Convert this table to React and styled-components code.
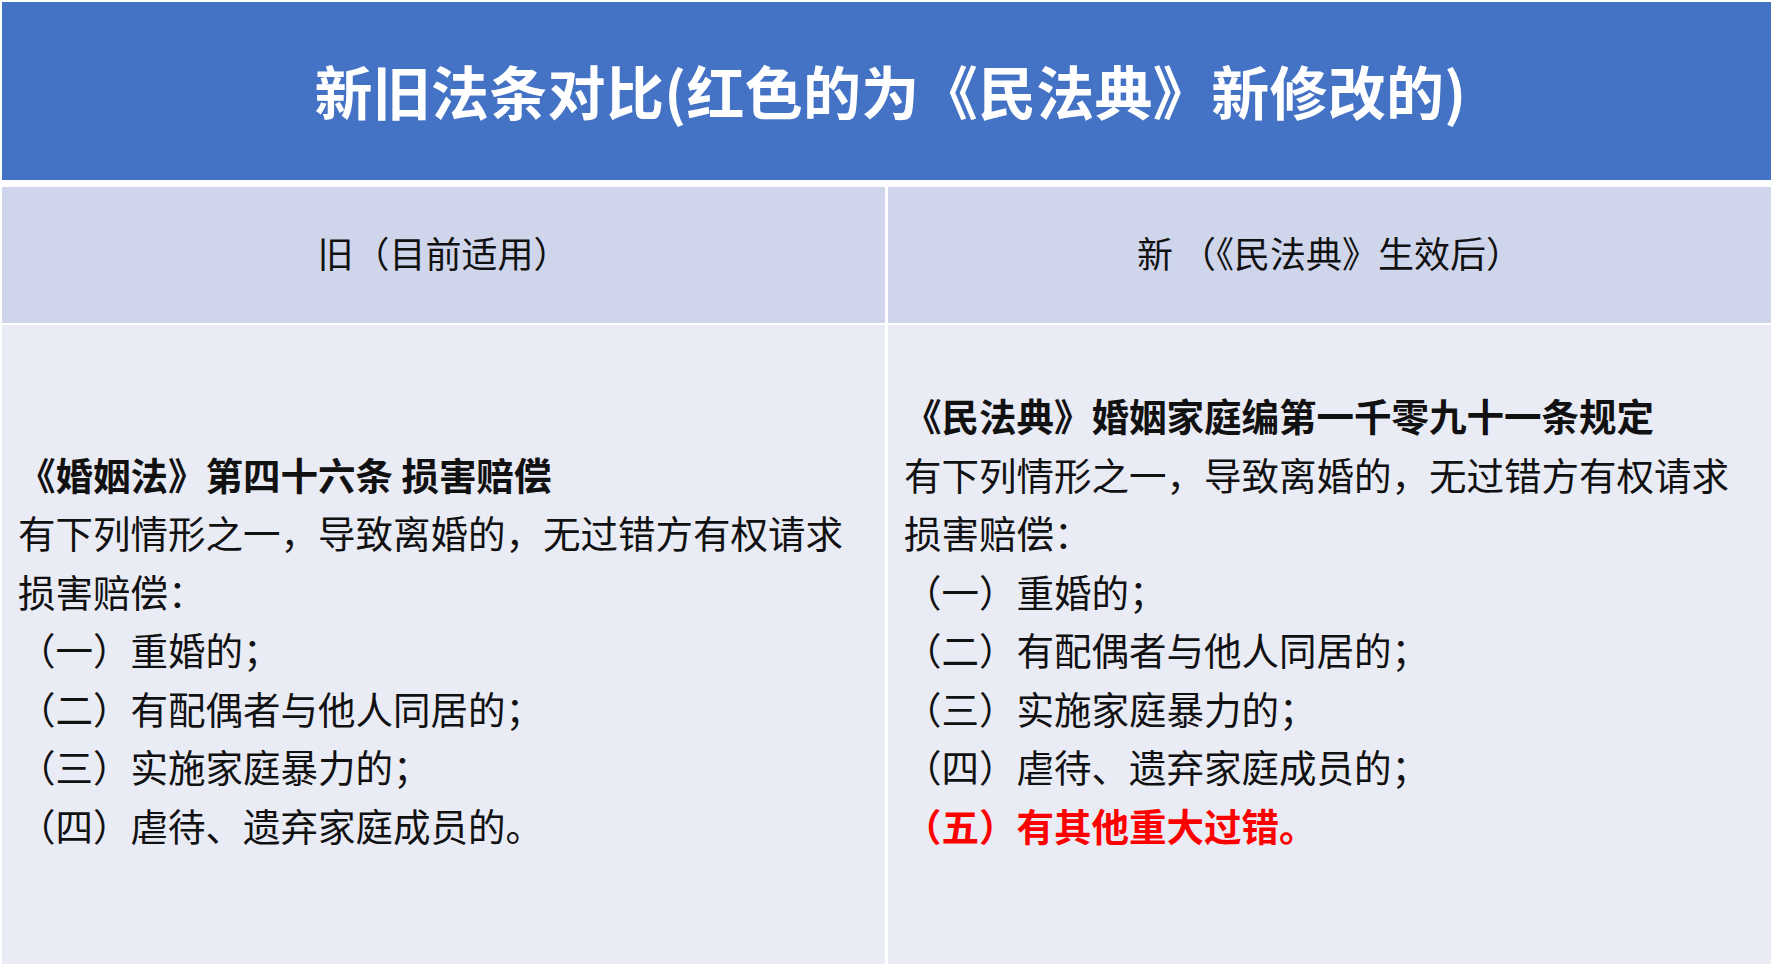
import React from "react";
import styled, { createGlobalStyle } from "styled-components";

const Global = createGlobalStyle`
  html, body { margin: 0; padding: 0; background: #ffffff; }
  body { font-family: "Noto Sans CJK SC", "Noto Sans", sans-serif; }
`;

const Page = styled.div`
  width: 1777px;
  height: 968px;
  box-sizing: border-box;
  padding: 2px 6px 4px 2px;
  background: #ffffff;
`;

const TitleBar = styled.div`
  height: 178px;
  background: #4472c4;
  display: flex;
  align-items: center;
  justify-content: center;
  margin-bottom: 7px;
`;

const Title = styled.h1`
  margin: 0;
  padding-bottom: 2px;
  padding-left: 8px;
  color: #ffffff;
  font-size: 58px;
  font-weight: 700;
  line-height: 1;
  letter-spacing: 0.3px;
`;

const Grid = styled.div`
  display: grid;
  grid-template-columns: 1fr 1fr;
  grid-template-rows: 136px 639px;
  column-gap: 3px;
  row-gap: 2px;
`;

const HeadCell = styled.div`
  background: #cfd5ea;
  display: flex;
  align-items: center;
  justify-content: center;
  padding-bottom: 6px;
  box-sizing: border-box;
  color: #111111;
  font-size: 36px;
  line-height: 1;
  white-space: pre;
`;

const BodyCell = styled.div`
  background: #e9ebf5;
  display: flex;
  flex-direction: column;
  justify-content: flex-end;
  box-sizing: border-box;
  padding: 0 12px 110px 16px;
  color: #111111;
  font-size: 37.5px;
  line-height: 58.5px;
`;

const Line = styled.div`
  white-space: nowrap;
  font-weight: ${(p) => (p.$bold || p.$red ? 700 : 400)};
  color: ${(p) => (p.$red ? "#ff0000" : "#111111")};
`;

export default function App() {
  return (
    <>
      <Global />
      <Page>
        <TitleBar>
          <Title>新旧法条对比(红色的为《民法典》新修改的)</Title>
        </TitleBar>
        <Grid>
          <HeadCell>旧（目前适用）</HeadCell>
          <HeadCell>{"新\u2009（《民法典》生效后）"}</HeadCell>
          <BodyCell>
            <Line $bold>《婚姻法》第四十六条 损害赔偿</Line>
            <Line>有下列情形之一，导致离婚的，无过错方有权请求</Line>
            <Line>损害赔偿：</Line>
            <Line>（一）重婚的；</Line>
            <Line>（二）有配偶者与他人同居的；</Line>
            <Line>（三）实施家庭暴力的；</Line>
            <Line>（四）虐待、遗弃家庭成员的。</Line>
          </BodyCell>
          <BodyCell>
            <Line $bold>《民法典》婚姻家庭编第一千零九十一条规定</Line>
            <Line>有下列情形之一，导致离婚的，无过错方有权请求</Line>
            <Line>损害赔偿：</Line>
            <Line>（一）重婚的；</Line>
            <Line>（二）有配偶者与他人同居的；</Line>
            <Line>（三）实施家庭暴力的；</Line>
            <Line>（四）虐待、遗弃家庭成员的；</Line>
            <Line $red>（五）有其他重大过错。</Line>
          </BodyCell>
        </Grid>
      </Page>
    </>
  );
}
